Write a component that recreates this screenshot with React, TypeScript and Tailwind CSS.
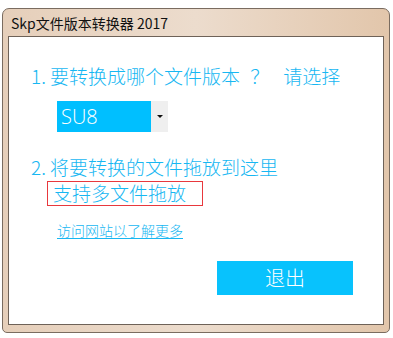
import React from "react";

const cjk = { fontFamily: '"Noto Sans CJK SC", "Noto Sans", sans-serif' };

export default function App() {
  return (
    <div className="w-[393px] h-[338px] bg-white overflow-hidden" style={cjk}>
      <div className="ml-[2px] mt-[8px] w-[388px] h-[325px] rounded-t-[7px] rounded-b-[5px] border border-[#7a6c60] bg-gradient-to-r from-[#e6cfba] via-[#ecdccd] to-[#e2c6ab] flex flex-col">
        {/* title bar */}
        <div className="h-[27px] flex items-center pl-[8px] text-[14px] text-[#111] leading-none">
          Skp文件版本转换器 2017
        </div>
        {/* client area */}
        <div className="mx-[5px] mb-[7px] flex-1 border border-[#6e6258] bg-white text-[#17b7f2] font-light pl-[22px]">
          <div className="mt-[27px] text-[19px] leading-[24px] whitespace-nowrap">
            1. 要转换成哪个文件版本<span className="ml-[10px] mr-[14px]">？</span>请选择
          </div>

          <div className="mt-[13px] ml-[26px] flex h-[31px] w-[111px]">
            <div className="w-[94px] bg-[#00bfff] text-white text-[20px] leading-[31px] pl-[4px]" style={{ fontFamily: '"Open Sans", "Noto Sans", sans-serif' }}>
              SU8
            </div>
            <div className="w-[17px] bg-[#efefef] flex items-center justify-center">
              <svg width="6" height="4" viewBox="0 0 6 4">
                <path d="M0 0h6L3 3z" fill="#111" />
              </svg>
            </div>
          </div>

          <div className="mt-[23px] text-[19px] leading-[24px] whitespace-nowrap">
            2. 将要转换的文件拖放到这里
          </div>
          <div className="ml-[16px] mt-[2px] w-[156px] h-[25px] border border-[#e8383d] text-[19px] leading-[22px] pl-[5px]">
            支持多文件拖放
          </div>

          <div className="mt-[16px] ml-[26px] text-[14px] leading-[16px] underline underline-offset-2">
            访问网站以了解更多
          </div>

          <div className="mt-[23px] ml-[186px] w-[136px] h-[34px] bg-[#08c2fd] text-white text-[20px] flex items-center justify-center">
            退出
          </div>
        </div>
      </div>
    </div>
  );
}
